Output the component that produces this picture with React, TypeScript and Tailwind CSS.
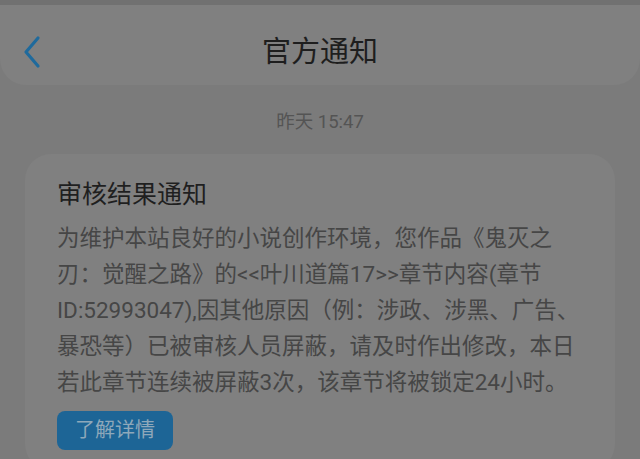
const lines = [
  '为维护本站良好的小说创作环境，您作品《鬼灭之',
  '刃：觉醒之路》的<<叶川道篇17>>章节内容(章节',
  'ID:52993047),因其他原因（例：涉政、涉黑、广告、',
  '暴恐等）已被审核人员屏蔽，请及时作出修改，本日',
  '若此章节连续被屏蔽3次，该章节将被锁定24小时。',
];

function BackIcon() {
  return (
    <svg width="22" height="34" viewBox="0 0 22 34" fill="none">
      <path d="M16 3 L4 17 L16 31" stroke="#1f6a9c" strokeWidth="3.2" strokeLinecap="round" strokeLinejoin="round" />
    </svg>
  );
}

export default function App() {
  return (
    <div
      className="w-[640px] h-[459px] overflow-hidden bg-[#7b7b7b] flex flex-col"
      style={{ fontFamily: 'Roboto, "Noto Sans CJK SC", sans-serif' }}
    >
      <div className="h-[5px] bg-[#717171] shrink-0" />
      <header className="h-[80px] shrink-0 bg-[#808080] rounded-b-[26px] flex items-center relative">
        <div className="absolute left-[22px] top-[30px]">
          <BackIcon />
        </div>
        <h1 className="flex-1 text-center text-[29px] text-[#1e1e1e] leading-none pt-[14px]">官方通知</h1>
      </header>
      <div className="text-center text-[18.5px] text-[#545454] mt-[28px] leading-none">昨天 15:47</div>
      <div className="mx-[25px] mt-[22px] bg-[#808080] rounded-[26px] px-[32px] pt-[28px] pb-[20px] flex-1">
        <h2 className="text-[25px] text-[#1f1f1f] leading-none font-normal">审核结果通知</h2>
        <div className="mt-[13px] text-[22.5px] text-[#464646] leading-[36px] whitespace-nowrap">
          {lines.map((l) => (
            <div key={l}>{l}</div>
          ))}
        </div>
        <button className="mt-[11px] w-[116px] h-[39px] rounded-[8px] bg-[#1d6596] text-[#8ea8ba] text-[20px] leading-none">
          了解详情
        </button>
      </div>
    </div>
  );
}
